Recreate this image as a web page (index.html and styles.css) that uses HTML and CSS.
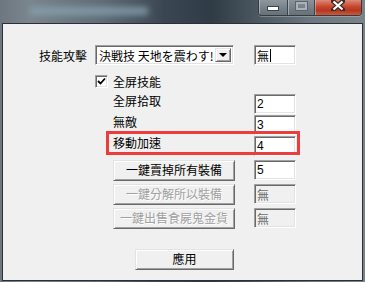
FILE: index.html
```html
<!DOCTYPE html>
<html>
<head>
    <meta charset="utf-8">
    <title>設定</title>
    <link rel="stylesheet" href="styles.css">
</head>
<body>
    <div class="frame">
        <div class="titlebar">
            <div class="title-glow"></div>
            <div class="caption">
                <div class="cap-btn cap-min"><span class="min-bar"></span></div>
                <div class="cap-btn cap-max"><span class="max-box"></span></div>
                <div class="cap-btn cap-close">
                    <svg width="14" height="11" viewBox="0 0 14 11">
                        <path d="M2 1 L12 10 M12 1 L2 10" stroke="#3b2a26" stroke-width="4.5" stroke-linecap="square"/>
                        <path d="M2.5 1.5 L11.5 9.5 M11.5 1.5 L2.5 9.5" stroke="#ffffff" stroke-width="2.2"/>
                    </svg>
                </div>
            </div>
        </div>

        <div class="client">
            <div class="row row-skill">
                <div class="label-cell">技能攻擊</div>
                <div class="combo">
                    <div class="combo-text">決戦技 天地を震わす!</div>
                    <div class="combo-btn"><span class="arrow"></span></div>
                </div>
                <div class="edit edit-first">無<span class="caret"></span></div>
            </div>

            <div class="row row-check">
                <div class="checkbox">
                    <svg width="9" height="9" viewBox="0 0 9 9">
                        <path d="M1 4 L3.5 6.5 L8 1.5" stroke="#000" stroke-width="1.8" fill="none"/>
                    </svg>
                </div>
                <div class="check-label">全屏技能</div>
            </div>

            <div class="row row-sub row-pick">
                <div class="sub-label">全屏拾取</div>
                <div class="edit">2</div>
            </div>
            <div class="row row-sub">
                <div class="sub-label">無敵</div>
                <div class="edit">3</div>
            </div>
            <div class="row row-sub">
                <div class="sub-label">移動加速</div>
                <div class="edit">4</div>
            </div>

            <div class="row row-btn row-sell">
                <div class="btn btn-wide">一鍵賣掉所有裝備</div>
                <div class="edit">5</div>
            </div>
            <div class="row row-btn">
                <div class="btn btn-wide disabled">一鍵分解所以裝備</div>
                <div class="edit disabled">無</div>
            </div>
            <div class="row row-btn">
                <div class="btn btn-wide disabled">一鍵出售食屍鬼金貨</div>
                <div class="edit disabled">無</div>
            </div>

            <div class="row row-apply">
                <div class="btn btn-apply">應用</div>
            </div>

            <div class="highlight"></div>
        </div>
    </div>
</body>
</html>
```

FILE: styles.css
```css
/* page + aero frame */
body {
    margin: 0;
    width: 365px;
    height: 282px;
    overflow: hidden;
    font-family: "Noto Sans CJK TC", "Noto Sans CJK JP", sans-serif;
    font-size: 12px;
    color: #000;
    background: linear-gradient(90deg, #6c777f 0%, #7a858d 8%, #5f6c76 28%, #3a4752 45%, #2f3b45 58%, #4e5b65 72%, #6b767e 85%, #78838a 100%);
}

.frame {
    height: 282px;
    display: flex;
    flex-direction: column;
}

/* title bar */
.titlebar {
    height: 23px;
    position: relative;
    display: flex;
    justify-content: flex-end;
    align-items: flex-start;
    padding-right: 3px;
}

.title-glow {
    position: absolute;
    left: 30px;
    top: 7px;
    width: 118px;
    height: 8px;
    background: #88a3b1;
    filter: blur(3px);
    opacity: 0.8;
}

.caption {
    display: flex;
    height: 15px;
    border: 1px solid #343a40;
    border-top: none;
    border-radius: 0 0 4px 4px;
    overflow: hidden;
    box-shadow: 0 1px 0 rgba(255, 255, 255, 0.25);
}

.cap-btn {
    height: 15px;
    display: flex;
    justify-content: center;
    align-items: flex-start;
    box-shadow: inset 1px 0 0 rgba(255, 255, 255, 0.35);
}

.cap-min {
    width: 28px;
    background: linear-gradient(#8d979f, #737e87 60%, #66717a);
    border-right: 1px solid #3d444b;
}

.cap-max {
    width: 26px;
    background: linear-gradient(#8a949c, #727d86 60%, #66717a);
    border-right: 1px solid #3d444b;
}

.cap-close {
    width: 46px;
    background: linear-gradient(#d98a78, #c9452d 45%, #b53720 70%, #c85a3e);
}

.min-bar {
    width: 10px;
    height: 3px;
    margin-top: 6px;
    background: #fff;
    border: 1px solid #3b4249;
}

.max-box {
    width: 7px;
    height: 4px;
    margin-top: 2px;
    border: 2px solid #a9b2b9;
    outline: 1px solid #5b646c;
}

/* client area */
.client {
    flex: 1;
    position: relative;
    margin: 0 2px 1px 2px;
    border: 1px solid #2a3036;
    background: #f0f0f0;
    padding-top: 21px;
}

.row {
    display: flex;
    align-items: flex-start;
}

.row-skill {
    height: 20px;
}

.label-cell {
    width: 92px;
    box-sizing: border-box;
    padding-right: 8px;
    text-align: right;
    line-height: 20px;
    margin-top: 1px;
}

.combo {
    width: 139px;
    height: 20px;
    box-sizing: border-box;
    display: flex;
    background: #fff;
    border: 1px solid;
    border-color: #a0a0a0 #fff #fff #a0a0a0;
    box-shadow: inset 1px 1px 0 #696969, inset -1px -1px 0 #e3e3e3;
    padding: 2px;
    margin-right: 20px;
}

.combo-text {
    flex: 1;
    overflow: hidden;
    white-space: nowrap;
    line-height: 15px;
    padding-left: 1px;
}

.combo-btn {
    width: 16px;
    height: 14px;
    box-sizing: border-box;
    background: #f0f0f0;
    border: 1px solid;
    border-color: #e3e3e3 #696969 #696969 #e3e3e3;
    box-shadow: inset 1px 1px 0 #fff, inset -1px -1px 0 #a0a0a0;
    display: flex;
    justify-content: center;
    align-items: center;
}

.arrow {
    width: 0;
    height: 0;
    border-left: 4px solid transparent;
    border-right: 4px solid transparent;
    border-top: 4px solid #000;
}

/* edit boxes */
.edit {
    width: 42px;
    height: 20px;
    box-sizing: border-box;
    background: #fff;
    border: 1px solid;
    border-color: #a0a0a0 #fff #fff #a0a0a0;
    box-shadow: inset 1px 1px 0 #696969, inset -1px -1px 0 #e3e3e3;
    padding-left: 2px;
    line-height: 17px;
    font-family: "Liberation Sans", "Noto Sans CJK TC", sans-serif;
    font-size: 12px;
    display: flex;
    align-items: center;
}

.edit-first {
    font-family: "Noto Sans CJK TC", sans-serif;
}

.caret {
    width: 1px;
    height: 13px;
    background: #000;
    margin-left: 1px;
}

.edit.disabled {
    background: #f0f0f0;
    color: #6d6d6d;
    font-family: "Noto Sans CJK TC", sans-serif;
}

/* checkbox */
.row-check {
    margin-top: 10px;
    height: 13px;
    padding-left: 92px;
}

.checkbox {
    width: 13px;
    height: 13px;
    box-sizing: border-box;
    background: #fff;
    border: 1px solid;
    border-color: #a0a0a0 #fff #fff #a0a0a0;
    box-shadow: inset 1px 1px 0 #696969, inset -1px -1px 0 #e3e3e3;
    display: flex;
    justify-content: center;
    align-items: center;
}

.check-label {
    margin-left: 5px;
    line-height: 13px;
}

/* sub options */
.row-sub {
    margin-top: 1px;
    padding-left: 110px;
}

.row-pick {
    margin-top: 6px;
}

.sub-label {
    width: 141px;
    line-height: 14px;
}

/* buttons */
.row-btn {
    margin-top: 3px;
    padding-left: 110px;
}

.row-sell {
    margin-top: 4px;
}

.btn {
    box-sizing: border-box;
    height: 21px;
    background: #f0f0f0;
    border: 1px solid;
    border-color: #e3e3e3 #696969 #696969 #e3e3e3;
    box-shadow: inset 1px 1px 0 #fff, inset -1px -1px 0 #a0a0a0;
    text-align: center;
    line-height: 18px;
    font-size: 12px;
}

.btn-wide {
    width: 122px;
    margin-right: 19px;
}

.btn.disabled {
    color: #a0a0a0;
    text-shadow: 1px 1px 0 #fff;
}

.row-apply {
    margin-top: 20px;
    padding-left: 132px;
}

.btn-apply {
    width: 99px;
}

/* red annotation box */
.highlight {
    position: absolute;
    left: 103px;
    top: 107px;
    width: 194px;
    height: 24px;
    box-sizing: border-box;
    border: 3px solid #ee3b3b;
}
```
